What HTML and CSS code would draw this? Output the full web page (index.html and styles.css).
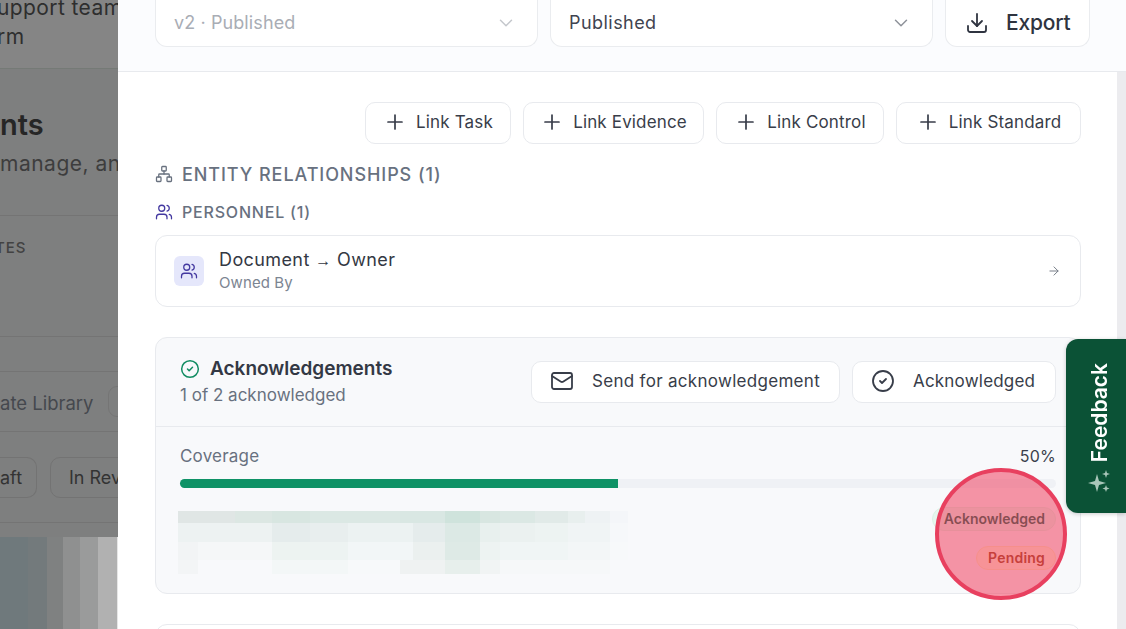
FILE: index.html
```html
<!DOCTYPE html>
<html lang="en">
<head>
  <meta charset="UTF-8">
  <title>Document details</title>
  <link rel="stylesheet" href="styles.css">
</head>
<body>
  <div class="page">
    <!-- dimmed page behind the drawer -->
    <div class="backdrop">
      <div class="bd-intro">
        <div class="bd-line-a">upport team</div>
        <div class="bd-line-b">rm</div>
      </div>
      <div class="bd-head">
        <div class="bd-title">nts</div>
        <div class="bd-sub">manage, and</div>
      </div>
      <div class="bd-label">TES</div>
      <div class="bd-gap"></div>
      <div class="bd-tabs">
        <span class="bd-tab-text">ate Library</span>
        <span class="bd-tab-edge"></span>
      </div>
      <div class="bd-chips">
        <span class="bd-chip bd-chip-cut">aft</span>
        <span class="bd-chip">In Review</span>
      </div>
      <div class="bd-image">
        <span class="bd-col bd-col-1"></span>
        <span class="bd-col bd-col-2"></span>
        <span class="bd-col bd-col-3"></span>
        <span class="bd-col bd-col-4"></span>
        <span class="bd-col bd-col-5"></span>
        <span class="bd-col bd-col-6"></span>
      </div>
    </div>

    <div class="drawer">
      <div class="topbar">
        <div class="select select-off">
          <span>v2 · Published</span>
          <svg class="chev" viewBox="0 0 24 24"><path d="m6 9 6 6 6-6"/></svg>
        </div>
        <div class="select">
          <span>Published</span>
          <svg class="chev" viewBox="0 0 24 24"><path d="m6 9 6 6 6-6"/></svg>
        </div>
        <button class="export">
          <svg class="ico-24" viewBox="0 0 24 24"><path d="M21 15v4a2 2 0 0 1-2 2H5a2 2 0 0 1-2-2v-4"/><path d="m7 10 5 5 5-5"/><path d="M12 15V3"/></svg>
          Export
        </button>
      </div>

      <div class="body">
        <div class="content">
          <div class="link-row">
            <button class="btn btn-task"><svg class="ico-plus" viewBox="0 0 24 24"><path d="M5 12h14M12 5v14"/></svg><span>Link Task</span></button>
            <button class="btn btn-evidence"><svg class="ico-plus" viewBox="0 0 24 24"><path d="M5 12h14M12 5v14"/></svg><span>Link Evidence</span></button>
            <button class="btn btn-control"><svg class="ico-plus" viewBox="0 0 24 24"><path d="M5 12h14M12 5v14"/></svg><span>Link Control</span></button>
            <button class="btn btn-standard"><svg class="ico-plus" viewBox="0 0 24 24"><path d="M5 12h14M12 5v14"/></svg><span>Link Standard</span></button>
          </div>

          <div class="section-title">
            <svg class="ico-18" viewBox="0 0 24 24"><rect x="16" y="16" width="6" height="6" rx="1"/><rect x="2" y="16" width="6" height="6" rx="1"/><rect x="9" y="2" width="6" height="6" rx="1"/><path d="M5 16v-3a1 1 0 0 1 1-1h12a1 1 0 0 1 1 1v3"/><path d="M12 12V8"/></svg>
            ENTITY RELATIONSHIPS (1)
          </div>
          <div class="group-title">
            <svg class="ico-18 indigo" viewBox="0 0 24 24"><path d="M16 21v-2a4 4 0 0 0-4-4H6a4 4 0 0 0-4 4v2"/><circle cx="9" cy="7" r="4"/><path d="M22 21v-2a4 4 0 0 0-3-3.87"/><path d="M16 3.13a4 4 0 0 1 0 7.75"/></svg>
            PERSONNEL (1)
          </div>

          <div class="rel-card">
            <div class="rel-icon">
              <svg class="ico-18 indigo" viewBox="0 0 24 24"><path d="M16 21v-2a4 4 0 0 0-4-4H6a4 4 0 0 0-4 4v2"/><circle cx="9" cy="7" r="4"/><path d="M22 21v-2a4 4 0 0 0-3-3.87"/><path d="M16 3.13a4 4 0 0 1 0 7.75"/></svg>
            </div>
            <div class="rel-text">
              <div class="rel-name">Document <span class="rel-arrow">→</span> Owner</div>
              <div class="rel-sub">Owned By</div>
            </div>
            <svg class="ico-arrow" viewBox="0 0 24 24"><path d="M5 12h14"/><path d="m12 5 7 7-7 7"/></svg>
          </div>

          <div class="ack-card">
            <div class="ack-head">
              <div class="ack-info">
                <div class="ack-title">
                  <svg class="ico-green" viewBox="0 0 24 24"><circle cx="12" cy="12" r="10"/><path d="m9 12 2 2 4-4"/></svg>
                  Acknowledgements
                </div>
                <div class="ack-sub">1 of 2 acknowledged</div>
              </div>
              <button class="btn btn-send">
                <svg class="ico-24" viewBox="0 0 24 24"><rect x="2" y="4" width="20" height="16" rx="2"/><path d="m22 7-8.97 5.7a1.94 1.94 0 0 1-2.06 0L2 7"/></svg>
                <span>Send for acknowledgement</span>
              </button>
              <button class="btn btn-ack">
                <svg class="ico-24" viewBox="0 0 24 24"><circle cx="12" cy="12" r="10"/><path d="m9 12 2 2 4-4"/></svg>
                <span>Acknowledged</span>
              </button>
            </div>
            <div class="ack-body">
              <div class="cov-row"><span>Coverage</span><span class="cov-num">50%</span></div>
              <div class="track"><div class="fill" style="width: 50%"></div></div>
              <div class="people">
                <div class="mosaic">
                  <div class="m-row m-1"></div>
                  <div class="m-row m-2"></div>
                  <div class="m-row m-3"></div>
                  <div class="m-row m-4"></div>
                </div>
                <div class="badges">
                  <span class="badge badge-ok">Acknowledged</span>
                  <span class="badge badge-wait">Pending</span>
                </div>
              </div>
            </div>
          </div>

          <div class="next-card"></div>
        </div>
        <div class="scrollbar"></div>
      </div>
    </div>
  </div>

  <!-- floating over the page -->
  <div class="feedback">
    <span class="feedback-text">Feedback</span>
    <svg class="spark" viewBox="0 0 24 24"><path d="M10 5l2 7 7 2-7 2-2 7-2-7-7-2 7-2z"/><path d="M19 1l1 3 3 1-3 1-1 3-1-3-3-1 3-1z"/><path d="M19 16l.9 2.6 2.6.9-2.6.9-.9 2.6-.9-2.6-2.6-.9 2.6-.9z"/></svg>
  </div>
  <div class="highlight"></div>
</body>
</html>
```

FILE: styles.css
```css
* {
  box-sizing: border-box;
}

html, body {
  margin: 0;
  height: 100%;
  overflow: hidden;
}

body {
  font-family: Inter, "Noto Sans", sans-serif;
  color: #2f3440;
  background: #fff;
  position: relative;
}

.page {
  display: flex;
  height: 629px;
}

svg {
  fill: none;
  stroke: currentColor;
  stroke-width: 2;
  stroke-linecap: round;
  stroke-linejoin: round;
  flex-shrink: 0;
}

/* Backdrop */
.backdrop {
  width: 118px;
  flex-shrink: 0;
  overflow: hidden;
  background: #7e7f7f;
  color: #262626;
  white-space: nowrap;
  display: flex;
  flex-direction: column;
}

.bd-intro {
  height: 69px;
  flex-shrink: 0;
  border-bottom: 1px solid #757a76;
  padding-left: 0;
  font-size: 21px;
  letter-spacing: 0.4px;
  line-height: 29px;
  background: #858585;
  color: #2e2e2e;
  text-indent: -3px;
}

.bd-line-a {
  margin-top: -7px;
}

.bd-head {
  height: 147px;
  flex-shrink: 0;
  padding-top: 39px;
  border-bottom: 1px solid #747474;
}

.bd-title {
  font-size: 29px;
  font-weight: 600;
  line-height: 34px;
}

.bd-sub {
  font-size: 21px;
  letter-spacing: 0.5px;
  line-height: 26px;
  margin-top: 9px;
  color: #3d3d3d;
}

.bd-label {
  height: 121px;
  flex-shrink: 0;
  padding-top: 22px;
  border-bottom: 1px solid #747474;
  font-size: 15px;
  font-weight: 500;
  letter-spacing: 1px;
  line-height: 20px;
  color: #424242;
  text-indent: -5px;
}

.bd-gap {
  height: 35px;
  flex-shrink: 0;
  border-bottom: 1px solid #747474;
}

.bd-tabs {
  height: 60px;
  flex-shrink: 0;
  border-bottom: 1px solid #747474;
  display: flex;
  align-items: center;
  gap: 14px;
  font-size: 18.5px;
  color: #45484e;
}

.bd-tab-text {
  margin-top: 3px;
}

.bd-tab-edge {
  width: 20px;
  height: 31px;
  flex-shrink: 0;
  border: 1px solid #757575;
  border-radius: 9px;
}

.bd-chips {
  height: 91px;
  flex-shrink: 0;
  padding-top: 25px;
  border-bottom: 1px solid #747474;
  display: flex;
  gap: 13px;
  font-size: 18px;
  color: #333;
}

.bd-chip {
  height: 41px;
  padding: 0 18px;
  border: 1px solid #737373;
  border-radius: 10px;
  line-height: 39px;
}

.bd-chip-cut {
  width: 37px;
  padding: 0;
  border-left: 0;
  border-radius: 0 10px 10px 0;
  flex-shrink: 0;
}

.bd-image {
  flex: 1;
  margin-top: 14px;
  border-right: 1px solid #e6e6e6;
  display: flex;
}

.bd-col-1 { width: 28px; background: #6f797c; }
.bd-col-2 { width: 19px; background: #737a7c; }
.bd-col-3 { width: 16px; background: #7f8181; }
.bd-col-4 { width: 17px; background: #8f9090; }
.bd-col-5 { width: 18px; background: #9a9b9b; }
.bd-col-6 { width: 19px; background: #b1b1b1; }

/* Drawer */
.drawer {
  flex: 1;
  min-width: 0;
  background: #fff;
  display: flex;
  flex-direction: column;
}

.topbar {
  height: 72px;
  flex-shrink: 0;
  padding: 0 36px 25px 37px;
  background: #fbfcfe;
  border-bottom: 1px solid #e8eaee;
  display: flex;
  gap: 12px;
}

.select {
  flex: 1;
  height: 47px;
  padding: 0 20px 1px 18px;
  background: #fff;
  border: 1px solid #eaecef;
  border-top: 0;
  border-radius: 0 0 12px 12px;
  display: flex;
  align-items: center;
  justify-content: space-between;
  font-size: 18px;
  letter-spacing: 0.45px;
  color: #3f4450;
}

.select-off {
  color: #a9adb5;
  letter-spacing: 0.1px;
}

.chev {
  width: 22px;
  height: 22px;
  color: #8e929a;
  stroke-width: 1.6;
}

.select-off .chev {
  color: #c4c7cc;
}

.export {
  width: 145px;
  height: 47px;
  padding: 0 0 1px 19px;
  background: #fff;
  border: 1px solid #eaecef;
  border-top: 0;
  border-radius: 0 0 12px 12px;
  display: flex;
  align-items: center;
  gap: 17px;
  font: 500 21px Inter, "Noto Sans", sans-serif;
  letter-spacing: -0.2px;
  color: #2f3440;
}

.ico-24 {
  width: 24px;
  height: 24px;
  stroke-width: 1.8;
}

.body {
  flex: 1;
  min-height: 0;
  display: flex;
}

.content {
  flex: 1;
  min-width: 0;
  overflow: hidden;
  padding: 30px 36px 0 37px;
}

.scrollbar {
  width: 9px;
  background: #ececef;
}

.link-row {
  display: flex;
  justify-content: flex-end;
  gap: 12px;
}

.btn {
  height: 42px;
  background: #fff;
  border: 1px solid #e8eaee;
  border-radius: 10px;
  display: flex;
  align-items: center;
  justify-content: center;
  font: 400 17px Inter, "Noto Sans", sans-serif;
  letter-spacing: 0.15px;
  color: #383d49;
  padding: 0 0 2px;
}

.ico-plus {
  width: 24px;
  height: 24px;
  margin-right: 9px;
  stroke-width: 1.7;
}

.btn-task { width: 146px; }
.btn-evidence { width: 181px; }
.btn-control { width: 168px; }
.btn-standard { width: 185px; }

.section-title {
  margin-top: 17px;
  height: 26px;
  display: flex;
  align-items: center;
  gap: 9px;
  font-size: 18px;
  font-weight: 500;
  letter-spacing: 0.93px;
  color: #68717f;
}

.group-title {
  margin-top: 12px;
  height: 26px;
  display: flex;
  align-items: center;
  gap: 9px;
  font-size: 16px;
  font-weight: 500;
  letter-spacing: 0.8px;
  color: #68717f;
}

.ico-18 {
  width: 18px;
  height: 18px;
  stroke-width: 1.7;
}

.indigo {
  color: #4338a0;
}

.rel-card {
  margin-top: 10px;
  height: 72px;
  padding: 0 18px;
  border: 1px solid #e8eaee;
  border-radius: 12px;
  display: flex;
  align-items: center;
  gap: 15px;
}

.rel-icon {
  width: 30px;
  height: 30px;
  border-radius: 6px;
  background: #e5e7fb;
  display: flex;
  align-items: center;
  justify-content: center;
}

.rel-text {
  flex: 1;
}

.rel-name {
  font-size: 18px;
  letter-spacing: 0.4px;
  line-height: 24px;
  color: #343843;
  margin-top: -2px;
}

.rel-arrow {
  font-family: "Liberation Sans", sans-serif;
  font-size: 16px;
}

.rel-sub {
  font-size: 15px;
  letter-spacing: 0.1px;
  line-height: 20px;
  color: #7c8592;
}

.ico-arrow {
  width: 14px;
  height: 14px;
  color: #757c87;
  stroke-width: 1.7;
  margin-right: 1px;
}

.ack-card {
  margin-top: 30px;
  height: 257px;
  background: #f8f9fb;
  border: 1px solid #e8eaee;
  border-radius: 12px;
}

.ack-head {
  height: 89px;
  padding: 0 24px;
  border-bottom: 1px solid #e8eaee;
  display: flex;
  align-items: center;
  gap: 12px;
}

.ack-info {
  flex: 1;
  margin-top: -1px;
}

.ack-title {
  display: flex;
  align-items: center;
  gap: 10px;
  font-size: 19px;
  font-weight: 600;
  line-height: 26px;
  color: #333844;
}

.ico-green {
  width: 20px;
  height: 20px;
  color: #128c62;
  stroke-width: 1.8;
}

.ack-sub {
  font-size: 17px;
  line-height: 26px;
  color: #68717f;
}

.btn-send {
  width: 309px;
  justify-content: flex-start;
  padding-left: 18px;
  gap: 18px;
  letter-spacing: 0.3px;
}

.btn-ack {
  width: 204px;
  justify-content: flex-start;
  padding-left: 18px;
  gap: 18px;
  letter-spacing: 0.2px;
}

.ack-body {
  padding: 17px 24px 0;
}

.cov-row {
  display: flex;
  justify-content: space-between;
  font-size: 17px;
  letter-spacing: 0.2px;
  line-height: 24px;
  color: #68717f;
}

.cov-num {
  font-size: 16px;
  color: #3a3f4b;
}

.track {
  margin-top: 11px;
  height: 9px;
  border-radius: 5px;
  background: #eff1f5;
}

.fill {
  height: 100%;
  border-radius: 5px 0 0 5px;
  background: #0f9266;
}

.people {
  margin-top: 19px;
  display: flex;
  justify-content: space-between;
}

/* blurred-out names */
.mosaic {
  width: 450px;
  margin: 4px 0 0 -2px;
  display: flex;
  flex-direction: column;
  filter: blur(0.7px);
}

.m-1 {
  height: 12px;
  background: linear-gradient(90deg,
    #e0e6e5 0 57px, #dce7e3 57px 94px, #d8e6e1 94px 132px, #dbe8e4 132px 222px,
    #d9e7e3 222px 267px, #cfe3dc 267px 302px, #d8e6e1 302px 322px, #dbe8e4 322px 357px,
    #e1eae8 357px 390px, #e8efee 390px 407px, #eef2f4 407px 432px, #f4f6f9 432px 450px);
}

.m-2 {
  height: 19px;
  background: linear-gradient(90deg,
    #edf2f2 0 94px, #e5ecec 94px 132px, #e8eeee 132px 170px, #ecf2f2 170px 235px,
    #e5ecec 235px 267px, #dcE9e5 267px 302px, #e8f0ee 302px 322px, #ebf1f0 322px 357px,
    #edf3f2 357px 390px, #f0f4f5 390px 432px, #f6f8fa 432px 450px);
}

.m-3 {
  height: 18px;
  background: linear-gradient(90deg,
    #f2f4f5 0 20px, #f5f7f8 20px 94px, #edf3f1 94px 132px, #edf3f2 132px 170px,
    #f2f6f7 170px 235px, #ebf0ef 235px 267px, #deeae6 267px 302px, #edf3f2 302px 322px,
    #f0f5f5 322px 390px, #f3f6f7 390px 432px, #f7f9fa 432px 450px);
}

.m-4 {
  height: 14px;
  background: linear-gradient(90deg,
    #f3f5f6 0 20px, #f8f9fb 20px 94px, #f3f7f7 94px 170px, #f7f9fa 170px 222px,
    #eff2f2 222px 267px, #e7efec 267px 302px, #f1f4f4 302px 322px, #f6f8f9 322px 432px,
    #f8f9fb 432px 450px);
}

.badges {
  display: flex;
  flex-direction: column;
  align-items: flex-end;
  gap: 15px;
}

.badge {
  height: 24px;
  border-radius: 12px;
  padding: 0 10px 0 11px;
  font-size: 14px;
  font-weight: 600;
  line-height: 22px;
  border: 1px solid transparent;
}

.badge-ok {
  background: #e6f7ee;
  border-color: #dcf2e5;
  color: #065f46;
}

.badge-wait {
  background: #fef9db;
  border-color: #fdf0c0;
  color: #92400e;
  letter-spacing: 0.2px;
}

.next-card {
  margin-top: 30px;
  height: 40px;
  background: #fff;
  border: 1px solid #e8eaee;
  border-radius: 12px;
}

/* Overlays */
.feedback {
  position: absolute;
  left: 1066px;
  top: 339px;
  width: 60px;
  height: 174px;
  padding: 24px 0 0 6px;
  border-radius: 12px 0 0 12px;
  background: #0b5236;
  box-shadow: 0 1px 4px rgba(0, 0, 0, 0.2);
  color: #fff;
  display: flex;
  flex-direction: column;
  align-items: center;
  gap: 7px;
}

.feedback-text {
  writing-mode: vertical-rl;
  transform: rotate(180deg);
  font-size: 21px;
  font-weight: 600;
}

.spark {
  width: 24px;
  height: 24px;
  fill: #a9c6b9;
  stroke: none;
}

.highlight {
  position: absolute;
  left: 935px;
  top: 468px;
  width: 132px;
  height: 132px;
  border-radius: 50%;
  border: 4px solid #e8405f;
  background: rgba(240, 64, 95, 0.55);
}
```
